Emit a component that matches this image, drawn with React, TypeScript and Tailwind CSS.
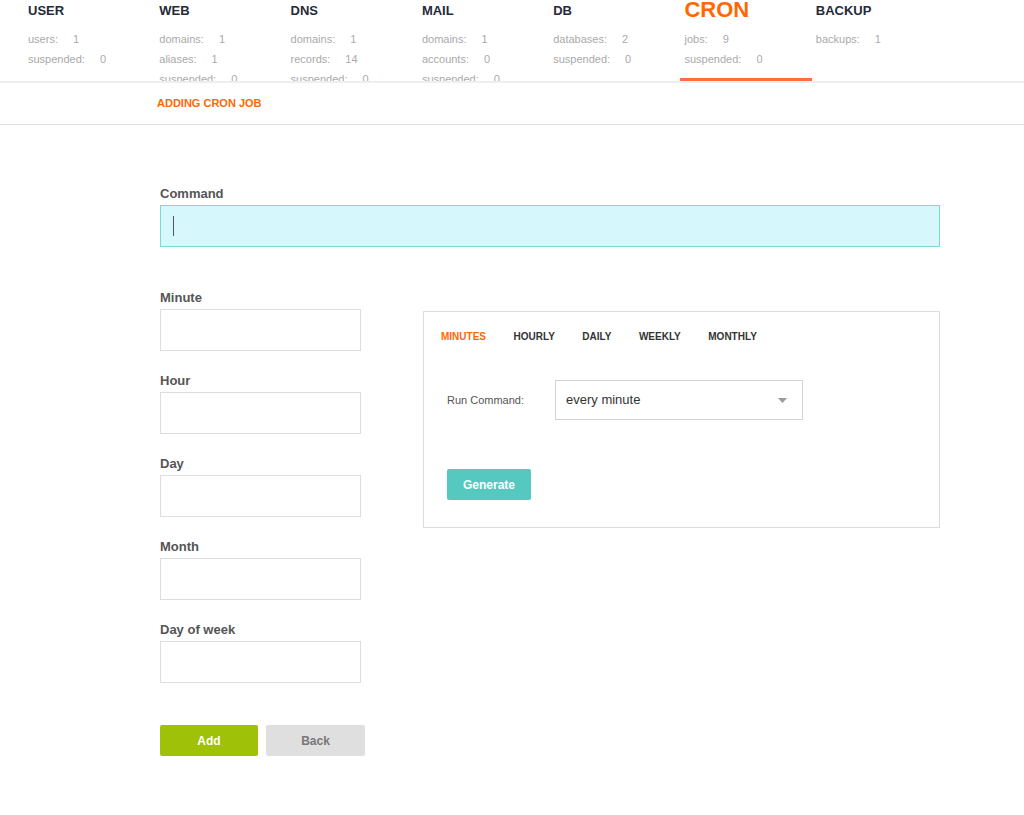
import React from "react";

// Top panel tabs with their counters
const TABS = [
  { title: "USER", stats: [["users:", "1"], ["suspended:", "0"]] },
  { title: "WEB", stats: [["domains:", "1"], ["aliases:", "1"], ["suspended:", "0"]] },
  { title: "DNS", stats: [["domains:", "1"], ["records:", "14"], ["suspended:", "0"]] },
  { title: "MAIL", stats: [["domains:", "1"], ["accounts:", "0"], ["suspended:", "0"]] },
  { title: "DB", stats: [["databases:", "2"], ["suspended:", "0"]] },
  { title: "CRON", stats: [["jobs:", "9"], ["suspended:", "0"]], active: true },
  { title: "BACKUP", stats: [["backups:", "1"]] },
];

const FIELDS = ["Minute", "Hour", "Day", "Month", "Day of week"];

const SCHEDULE_TABS = ["MINUTES", "HOURLY", "DAILY", "WEEKLY", "MONTHLY"];

export default function App() {
  return (
    <div className="min-h-[815px] bg-white font-['Liberation_Sans',Arial,sans-serif]">
      <nav className="flex h-[83px] border-b-2 border-[#eeeeee] pl-6">
        {TABS.map((tab) => (
          <div
            key={tab.title}
            className={
              tab.active
                ? "h-[81px] w-[131.3px] shrink-0 overflow-hidden border-b-[3px] border-[#ff6e42] pl-1"
                : "h-[81px] w-[131.3px] shrink-0 overflow-hidden pl-1"
            }
          >
            <div className="flex h-5 items-center">
              {tab.active ? (
                <span className="text-[22px] leading-none font-bold text-[#ff6701]">
                  {tab.title}
                </span>
              ) : (
                <span className="text-[13px] leading-none font-bold text-[#262a38]">
                  {tab.title}
                </span>
              )}
            </div>
            <div className="mt-[9px]">
              {tab.stats.map(([label, value]) => (
                <div key={label} className="flex h-5 items-center text-[11px] text-[#aaaaaa]">
                  <span>{label}</span>
                  <span className="ml-[15px]">{value}</span>
                </div>
              ))}
            </div>
          </div>
        ))}
      </nav>

      <div className="flex h-[42px] items-center border-b border-[#dddddd] pl-[157px]">
        <span className="text-[11px] font-bold text-[#ff6701]">ADDING CRON JOB</span>
      </div>

      <main className="ml-[160px] w-[780px] pt-[61px] pb-16">
        <label className="mb-[3px] block text-[13px] leading-4 font-bold text-[#555555]">
          Command
        </label>
        <div className="flex h-[42px] items-center border border-[#7dd8cf] bg-[#d6f8fd] pl-3">
          <span className="h-5 w-px bg-[#555555]" />
        </div>

        <div className="mt-[43px] flex gap-[62px]">
          <div className="flex w-[201px] flex-col gap-[22px]">
            {FIELDS.map((f) => (
              <div key={f}>
                <label className="mb-[3px] block text-[13px] leading-4 font-bold text-[#555555]">
                  {f}
                </label>
                <div className="h-[42px] border border-[#dddddd] bg-white" />
              </div>
            ))}
          </div>

          <div className="mt-[21px] h-[217px] w-[517px] border border-[#dddddd] pt-[19px]">
            <div className="flex gap-[27.5px] pl-[17px]">
              {SCHEDULE_TABS.map((t, i) => (
                <span
                  key={t}
                  className={
                    i === 0
                      ? "text-[10px] leading-3 font-bold text-[#ff6701]"
                      : "text-[10px] leading-3 font-bold text-[#333333]"
                  }
                >
                  {t}
                </span>
              ))}
            </div>

            <div className="mt-[37px] flex items-center pl-[23px]">
              <span className="w-[108px] text-[11px] text-[#555555]">Run Command:</span>
              <div className="flex h-[40px] w-[248px] items-center justify-between border border-[#d4d4d4] pr-[15px] pl-[10px]">
                <span className="text-[13px] text-[#333333]">every minute</span>
                <svg width="9" height="5" viewBox="0 0 9 5">
                  <path d="M0 0h9L4.5 5z" fill="#999999" />
                </svg>
              </div>
            </div>

            <button className="mt-[49px] ml-[23px] h-[31px] w-[84px] rounded-[2px] bg-[#55c9c0] text-[12px] font-bold text-white">
              Generate
            </button>
          </div>
        </div>

        <div className="mt-[42px] flex gap-2">
          <button className="h-[31px] w-[98px] rounded-[2px] bg-[#9fc107] text-[12px] font-bold text-white">
            Add
          </button>
          <button className="h-[31px] w-[99px] rounded-[2px] bg-[#dfdfdf] text-[12px] font-bold text-[#777777]">
            Back
          </button>
        </div>
      </main>
    </div>
  );
}
